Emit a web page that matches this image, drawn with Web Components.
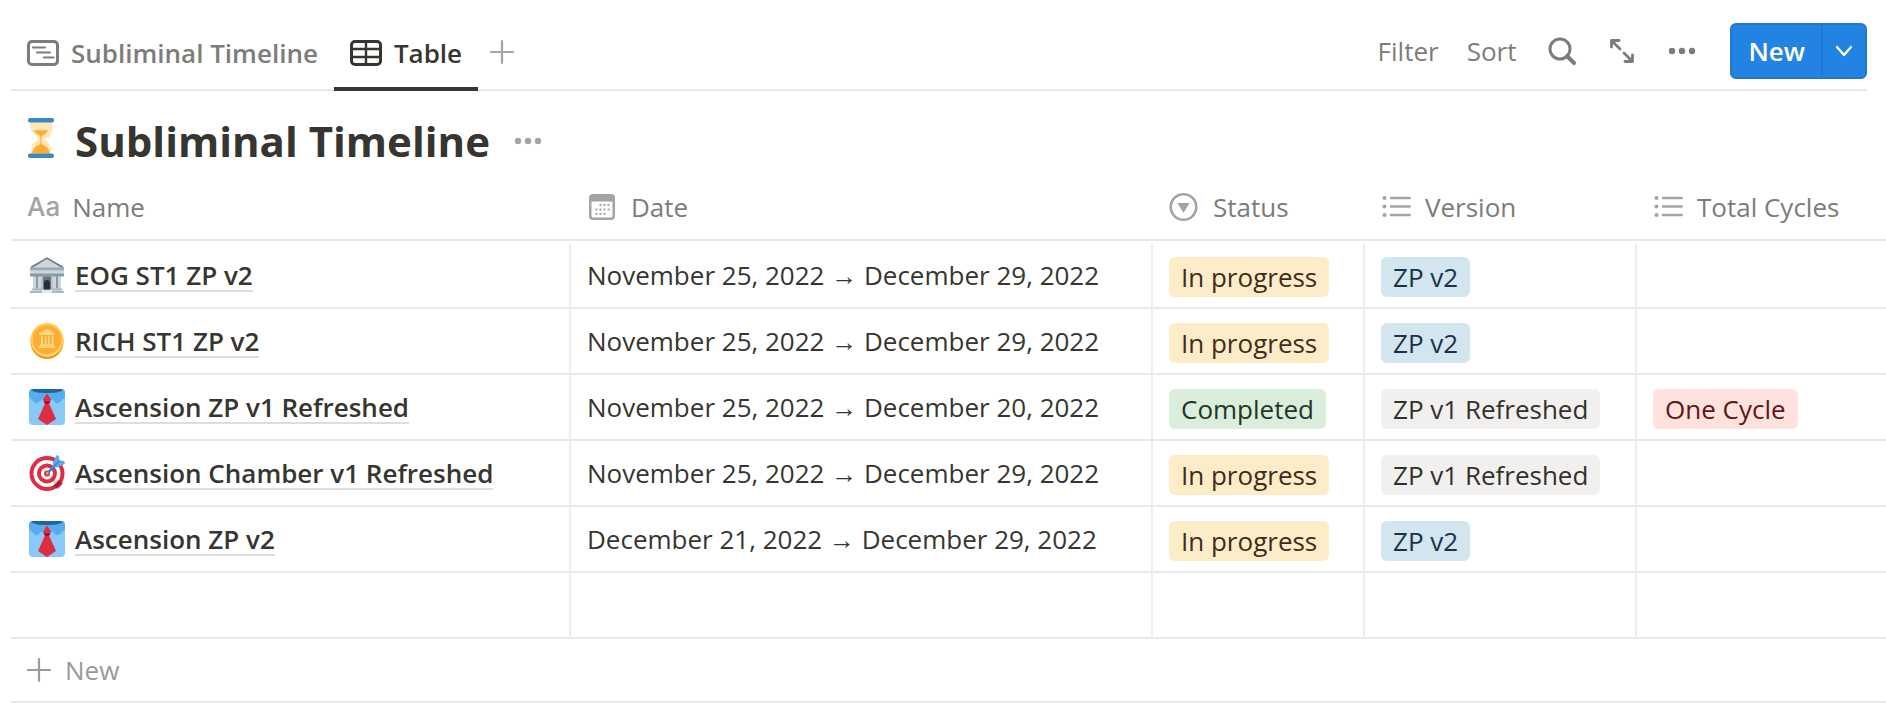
<!DOCTYPE html>
<html lang="en">
<head>
<meta charset="utf-8">
<meta name="viewport" content="width=device-width, initial-scale=1">
<title>Subliminal Timeline</title>
<style>
  :root {
    --ink: #37352f;
    --muted: #7d7c78;
    --faint: #a5a4a0;
    --line: #e9e9e7;
    --accent: #2383e2;
    --gutter: 16px;
  }
  body {
    margin: 0;
    background: #fff;
    color: var(--ink);
    font: 400 26px/36px "Open Sans", "Segoe UI", sans-serif;
  }
</style>
</head>
<body>
<database-view></database-view>

<script>
const ICONS = {
  timeline: [32, 26, '<rect x="1.5" y="1.5" width="29" height="23" rx="3.5" fill="none" stroke="currentColor" stroke-width="3"/><path d="M6 7.5h12M10 12.500h13M17 17.500h9.500" stroke="currentColor" stroke-width="2.2" stroke-linecap="round" fill="none"/>'],
  table: [32, 26, '<rect x="1.5" y="1.5" width="29" height="23" rx="3.5" fill="none" stroke="currentColor" stroke-width="3"/><path d="M2 9h28M2 17h28M16 2v22" stroke="currentColor" stroke-width="2.4" fill="none"/>'],
  plus: [24, 24, '<path d="M12 1v22M1 12h22" stroke="currentColor" stroke-width="2.2" stroke-linecap="round" fill="none"/>'],
  search: [28, 28, '<circle cx="12" cy="12" r="10" fill="none" stroke="currentColor" stroke-width="3"/><path d="M19 19l7 7" stroke="currentColor" stroke-width="4" stroke-linecap="round"/>'],
  expand: [28, 28, '<path d="M3.500 10V3.500H11M4 4l8 8M24.500 18v6.500H17M24 24l-8-8" fill="none" stroke="currentColor" stroke-width="2.800" stroke-linecap="round" stroke-linejoin="round"/>'],
  dots: [28, 28, '<g fill="currentColor"><circle cx="4" cy="14" r="3.200"/><circle cx="14" cy="14" r="3.200"/><circle cx="24" cy="14" r="3.200"/></g>'],
  chevron: [18, 18, '<path d="M2 5l7 8 7-8" fill="none" stroke="currentColor" stroke-width="2.400" stroke-linecap="round" stroke-linejoin="round"/>'],
  date: [28, 28, '<path fill="currentColor" fill-rule="evenodd" d="M6 1h18a4 4 0 0 1 4 4v18a4 4 0 0 1-4 4H6a4 4 0 0 1-4-4V5a4 4 0 0 1 4-4zM4.500 8.500v14A2 2 0 0 0 6.500 24.500h17a2 2 0 0 0 2-2v-14z"/><path fill="currentColor" d="M12.500 11h2v2h-2zM16.500 11h2v2h-2zM20.500 11h2v2h-2zM8.500 15.500h2v2h-2zM12.500 15.500h2v2h-2zM16.500 15.500h2v2h-2zM20.500 15.500h2v2h-2zM8.500 20h2v2h-2zM12.500 20h2v2h-2zM16.500 20h2v2h-2z"/>'],
  select: [28, 28, '<circle cx="14.500" cy="14" r="12.800" fill="none" stroke="currentColor" stroke-width="2.600"/><path d="M9.500 10h10a.6.6 0 0 1 .5 1l-4.900 8a.7.7 0 0 1-1.200 0l-4.900-8a.6.6 0 0 1 .5-1z" fill="currentColor"/>'],
  list: [28, 28, '<g fill="currentColor"><circle cx="3.500" cy="5" r="2"/><circle cx="3.500" cy="13.500" r="2"/><circle cx="3.500" cy="22" r="2"/></g><path d="M10 5h18.500M10 13.500h18.500M10 22h18.500" stroke="currentColor" stroke-width="2.600" stroke-linecap="round"/>'],
  hourglass: [28, 40, '<g transform="translate(1 0) scale(1.083 1.111)"><path fill="#ffe8b6" d="M21 18c0-2.001 3-3.459 3-10 0-2.500.1-4 0-5H0c.1 1-.1 2.500.1 5C.6 14.500 9 16 9 18S1.500 21.500 1 29c-.1 2-.2 3 0 4h22c.3-1 .1-2.500 0-4-.5-7.500-7-9-7-11z" transform="matrix(.84 0 0 1 2 0)"/><path fill="#ffac33" d="M12.500 17c0-1.500 4.500-2.500 6-6h-13c1.500 3.500 6 4.500 6 6v6c0 1.500-7.500 2-7.500 9h16c0-7-7.500-7.500-7.500-9z"/><rect width="24" height="4" rx="1.800" fill="#3b88c3"/><rect y="32" width="24" height="4" rx="1.800" fill="#3b88c3"/></g>'],
  bank: [36, 36, '<path fill="#e1e8ed" d="M2 33h11l5-1 5 1h11v3H2z"/><path fill="#ccd6dd" d="M1 12L18 2l17 10v2H1zM4 14h28v18H4z"/><path fill="#ccd6dd" d="M18 2L2 11h32z"/><path d="M2 10.500L18 1.200l16 9.300" fill="none" stroke="#66757f" stroke-width="1.500"/><path fill="#9aaab4" d="M1 10.500h34v3H1z"/><path fill="#ccd6dd" d="M1 13.500h34v3H1z"/><path fill="#8899a6" d="M1 16.500h34v3H1zM7 19.500h2v12H7zM27 19.500h2v12h-2z"/><path fill="#66757f" d="M13 19.500h10v13H13z"/><path fill="#b8c5cd" d="M12 19.500h2v13h-2zM22 19.500h2v13h-2z"/><path fill="#292f33" d="M15 32.500V26a3 3 0 0 1 6 0v6.500z"/><path fill="#aab8c2" d="M3 31.500h10v2H3zM23 31.500h10v2H23zM1 34h12v2H1zM23 34h12v2H23z"/>'],
  coin: [36, 36, '<ellipse cx="18" cy="19" rx="16.500" ry="17" fill="#f4900c"/><ellipse cx="18" cy="17" rx="16.500" ry="17" fill="#ffcc4d"/><ellipse cx="18" cy="18" rx="14.500" ry="14.500" fill="#ffe8b6"/><ellipse cx="18" cy="17" rx="14.500" ry="14.500" fill="#ffac33"/><path fill="#ffd983" d="M18 6l8 4v2H10v-2zM12 13h2v9h-2zM16 13h1.500v9H16zM19 13h1.500v9H19zM22.500 13h2v9h-2zM11 21.500h14V23H11zM9.500 23.200h17V25h-17z"/>'],
  necktie: [36, 36, '<rect width="36" height="36" rx="4" fill="#88c9f9"/><path fill="#55acee" d="M4 0h28a4 4 0 0 1 4 4v4c-3 3-5 5.500-7.500 6.500C25 13 22 9 18 5c-4 4-7 8-10.500 9.500C5 13.500 3 11 0 8V4a4 4 0 0 1 4-4z"/><path fill="#226699" d="M4 0h28l2 1c-3 2.400-9 3-16 3S5 3.400 2 1z"/><path fill="#dd2e44" d="M18 4.500l4.300 6-2.500 3.500L27 30l-9 6-9-6 7.200-16-2.500-3.500z"/><path fill="#a0041e" d="M14.500 12c2 1 5 1 7 0l-1 2.200c-1.500.8-3.500.8-5 0z"/>'],
  target: [36, 36, '<circle cx="18" cy="18.500" r="17.500" fill="#dd2e44"/><circle cx="18" cy="18.500" r="13.500" fill="#fff"/><circle cx="18" cy="18.500" r="10" fill="#dd2e44"/><circle cx="18" cy="18.500" r="6" fill="#fff"/><circle cx="18" cy="18.500" r="3" fill="#dd2e44"/><path fill="#58595b" opacity=".25" d="M18 19l10.500 14.300 5-5.500z"/><path fill="#a0041e" opacity=".6" d="M24.500 30.500L30 25l4 3.500c-1.500 2-3 4-6 5.600z"/><path stroke="#3b88c3" stroke-width="2.500" stroke-linecap="round" d="M18.500 18L29 7.500"/><circle cx="18.200" cy="18.200" r="1.200" fill="#ffac33"/><path fill="#55acee" d="M24 12c-1-3 1-8 4-12l2 1 .5 4.500L35 6l1 2.500c-4 3-9 5-12 3.500z"/><path stroke="#3b88c3" stroke-width="1.500" d="M24 12l7-6.500"/>']
};

/* Vector glyph, chosen by its name attribute. */
class VIcon extends HTMLElement {
  connectedCallback() {
    const [w, h, art] = ICONS[this.getAttribute('name')];
    this.attachShadow({ mode: 'open' }).innerHTML = `
      <style>
        :host { display: inline-flex; flex: none; }
        svg { display: block; overflow: visible; }
      </style>
      <svg width="${w}" height="${h}" viewBox="0 0 ${w} ${h}" aria-hidden="true">${art}</svg>`;
  }
}

class ViewTab extends HTMLElement {
  connectedCallback() {
    const on = this.hasAttribute('selected');
    this.attachShadow({ mode: 'open' }).innerHTML = `
      <style>
        :host { display: flex; margin-bottom: -2px; color: var(--muted); }
        :host([selected]) { color: var(--ink); }
        button {
          display: flex; align-items: center; gap: 12px;
          padding: 4px var(--gutter) 0; border: 0; border-bottom: 4px solid transparent;
          background: none; color: inherit; cursor: pointer;
          font: inherit; font-weight: 600; white-space: nowrap;
        }
        :host([selected]) button { border-bottom-color: currentColor; }
      </style>
      <button role="tab" aria-selected="${on}"><v-icon name="${this.getAttribute('icon')}"></v-icon><slot></slot></button>`;
  }
}

class ViewBar extends HTMLElement {
  connectedCallback() {
    this.attachShadow({ mode: 'open' }).innerHTML = `
      <style>
        :host {
          display: flex; justify-content: space-between;
          min-height: 75px; padding-top: 14px; margin-right: 19px;
          border-bottom: 2px solid var(--line);
        }
        .tabs, .tools, .split { display: flex; }
        .tools { align-items: center; gap: 32px; padding-bottom: 2px; color: var(--muted); }
        .words { display: flex; gap: 28px; }
        button {
          display: flex; align-items: center; padding: 0; border: 0;
          background: none; color: inherit; font: inherit; cursor: pointer;
        }
        .add { padding: 0 12px; color: var(--faint); }
        .split {
          height: 56px; margin-left: 2px; box-sizing: border-box;
          border: 2px solid #2078cf; border-radius: 6px;
          background: var(--accent); color: #fff; overflow: hidden;
        }
        .split .main { padding: 0 16px; font-weight: 600; }
        .split .more { padding: 0 12px; border-left: 2px solid #2078cf; }
      </style>
      <div class="tabs" role="tablist">
        <view-tab icon="timeline">Subliminal Timeline</view-tab>
        <view-tab icon="table" selected>Table</view-tab>
        <button class="add" aria-label="Add view"><v-icon name="plus"></v-icon></button>
      </div>
      <div class="tools">
        <div class="words"><button>Filter</button><button>Sort</button></div>
        <button aria-label="Search"><v-icon name="search"></v-icon></button>
        <button aria-label="Open as full page"><v-icon name="expand"></v-icon></button>
        <button aria-label="More options"><v-icon name="dots"></v-icon></button>
        <div class="split">
          <button class="main">New</button>
          <button class="more" aria-label="Templates"><v-icon name="chevron"></v-icon></button>
        </div>
      </div>`;
  }
}

class ViewTitle extends HTMLElement {
  connectedCallback() {
    this.attachShadow({ mode: 'open' }).innerHTML = `
      <style>
        :host { display: flex; align-items: center; padding: 22px var(--gutter) 6px; }
        v-icon[name="hourglass"] { margin-bottom: 6px; }
        h1 { margin: 0 24px 0 20px; font-size: 42px; line-height: 56px; font-weight: 700; white-space: nowrap; }
        button { display: flex; padding: 0; border: 0; background: none; color: var(--faint); cursor: pointer; }
      </style>
      <v-icon name="hourglass"></v-icon>
      <h1><slot></slot></h1>
      <button aria-label="Title options"><v-icon name="dots"></v-icon></button>`;
  }
}

class TagChip extends HTMLElement {
  connectedCallback() {
    this.attachShadow({ mode: 'open' }).innerHTML = `
      <style>
        :host {
          display: inline-flex; align-items: center; height: 40px;
          padding: 0 12px; border-radius: 6px; vertical-align: top;
          background: #f1f0ef; color: #32302c;
        }
        :host([tone="yellow"]) { background: #fdecc8; color: #402c1b; }
        :host([tone="green"]) { background: #dbeddb; color: #1c3829; }
        :host([tone="blue"]) { background: #d3e5ef; color: #183347; }
        :host([tone="red"]) { background: #ffe2dd; color: #5d1715; }
        span { line-height: 36px; white-space: nowrap; }
      </style>
      <span><slot></slot></span>`;
  }
}

const COLUMNS = [
  { label: 'Name', icon: 'text' },
  { label: 'Date', icon: 'date' },
  { label: 'Status', icon: 'select' },
  { label: 'Version', icon: 'list' },
  { label: 'Total Cycles', icon: 'list' }
];
const ROWS = [
  ['bank', 'EOG ST1 ZP v2', 'November 25, 2022 → December 29, 2022', ['yellow', 'In progress'], ['blue', 'ZP v2']],
  ['coin', 'RICH ST1 ZP v2', 'November 25, 2022 → December 29, 2022', ['yellow', 'In progress'], ['blue', 'ZP v2']],
  ['necktie', 'Ascension ZP v1 Refreshed', 'November 25, 2022 → December 20, 2022', ['green', 'Completed'], ['gray', 'ZP v1 Refreshed'], ['red', 'One Cycle']],
  ['target', 'Ascension Chamber v1 Refreshed', 'November 25, 2022 → December 29, 2022', ['yellow', 'In progress'], ['gray', 'ZP v1 Refreshed']],
  ['necktie', 'Ascension ZP v2', 'December 21, 2022 → December 29, 2022', ['yellow', 'In progress'], ['blue', 'ZP v2']]
];

class DataTable extends HTMLElement {
  connectedCallback() {
    const chip = t => `<td class="tags">${t ? `<tag-chip tone="${t[0]}">${t[1]}</tag-chip>` : ''}</td>`;
    const head = c => `<th scope="col"><div>${c.icon === 'text'
      ? '<span class="aa" aria-hidden="true">Aa</span>'
      : `<v-icon name="${c.icon}"></v-icon>`}<span>${c.label}</span></div></th>`;
    const row = r => `<tr>
      <td><div class="name"><v-icon name="${r[0]}"></v-icon><a href="#">${r[1]}</a></div></td>
      <td>${r[2]}</td>${chip(r[3])}${chip(r[4])}${chip(r[5])}</tr>`;
    this.attachShadow({ mode: 'open' }).innerHTML = `
      <style>
        :host { display: block; overflow: hidden; }
        table { width: 100%; table-layout: fixed; border-collapse: separate; border-spacing: 0; }
        .c1 { width: 560px; } .c2 { width: 582px; } .c3 { width: 212px; } .c4 { width: 272px; }
        th { padding: 0 0 2px; font-weight: 400; color: var(--muted); text-align: left; }
        th div {
          display: flex; align-items: center; gap: 16px; height: 64px;
          padding: 0 var(--gutter); border-bottom: 2px solid var(--line); white-space: nowrap;
        }
        th v-icon, .aa { color: var(--faint); }
        th:first-child div { gap: 12px; }
        .aa { font-family: Inter, sans-serif; font-weight: 500; }
        td {
          box-sizing: border-box; height: 66px; padding: 0 var(--gutter); white-space: nowrap;
          border-right: 2px solid #eeeeec; border-bottom: 2px solid var(--line);
        }
        td:last-child { border-right: 0; }
        td.tags { padding-top: 14px; vertical-align: top; }
        .name { display: flex; align-items: center; gap: 10px; padding-left: 2px; }
        a {
          padding-top: 2px; color: inherit; font-weight: 600; line-height: 30px;
          text-decoration: none; border-bottom: 2px solid #dededc;
        }
        .new {
          display: flex; align-items: center; gap: 14px; width: 100%; height: 64px;
          padding: 0 var(--gutter); border: 0; border-bottom: 2px solid var(--line);
          background: none; color: #9b9a97; font: inherit; cursor: pointer;
        }
      </style>
      <table>
        <colgroup><col class="c1"><col class="c2"><col class="c3"><col class="c4"><col></colgroup>
        <thead><tr>${COLUMNS.map(head).join('')}</tr></thead>
        <tbody>${ROWS.map(row).join('')}<tr><td></td><td></td><td></td><td></td><td></td></tr></tbody>
      </table>
      <button class="new"><v-icon name="plus"></v-icon>New</button>`;
  }
}

class DatabaseView extends HTMLElement {
  connectedCallback() {
    this.attachShadow({ mode: 'open' }).innerHTML = `
      <style>:host { display: block; padding-left: 11px; }</style>
      <view-bar></view-bar>
      <view-title>Subliminal Timeline</view-title>
      <data-table></data-table>`;
  }
}

customElements.define('v-icon', VIcon);
customElements.define('view-tab', ViewTab);
customElements.define('view-bar', ViewBar);
customElements.define('view-title', ViewTitle);
customElements.define('tag-chip', TagChip);
customElements.define('data-table', DataTable);
customElements.define('database-view', DatabaseView);
</script>
</body>
</html>
